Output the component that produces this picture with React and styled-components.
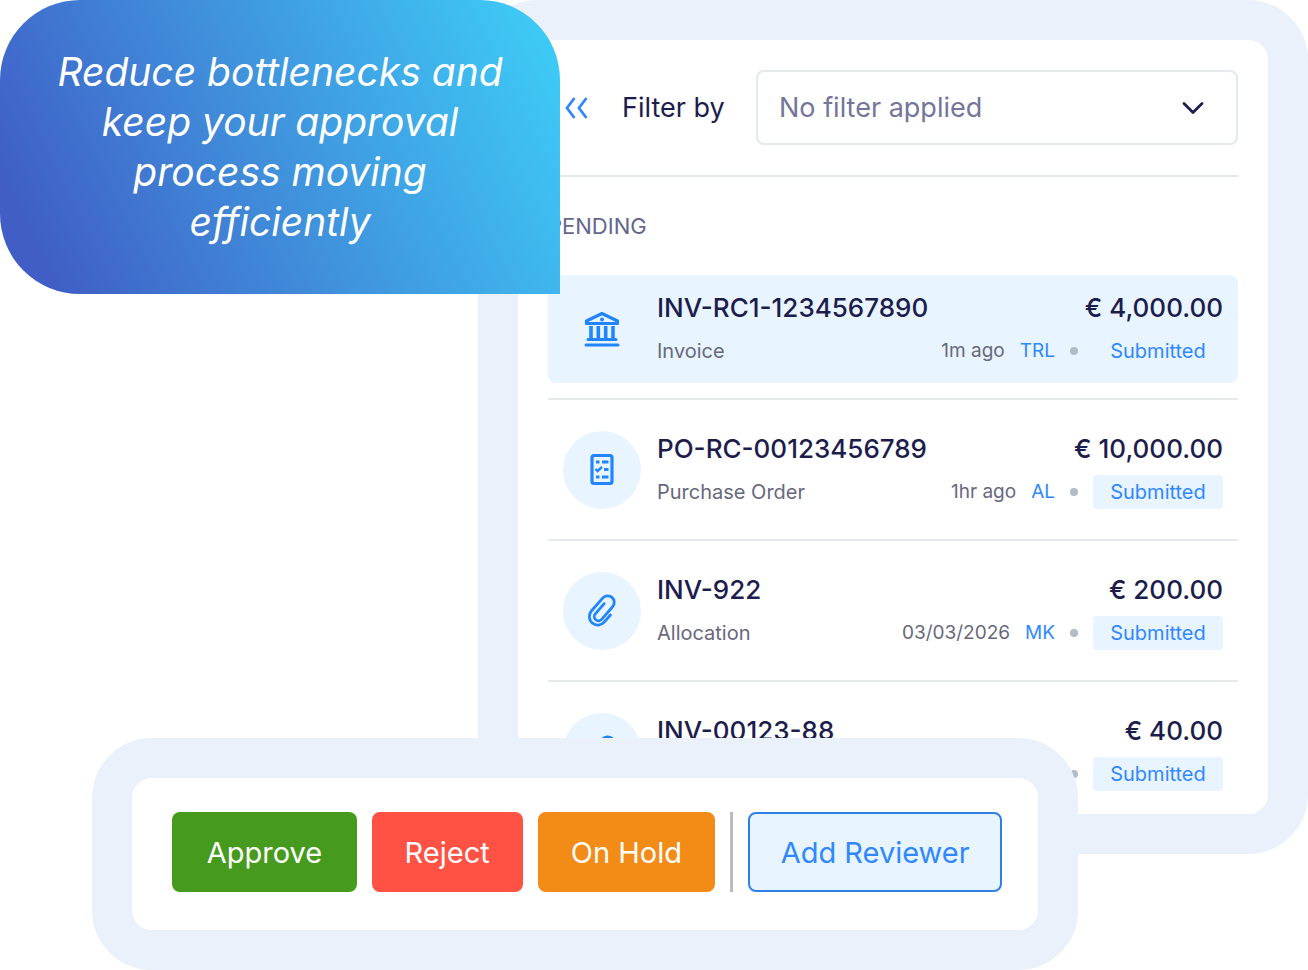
import React, { useState } from 'react';
import styled, { createGlobalStyle, css } from 'styled-components';

const documents = [
  { id: 'INV-RC1-1234567890', type: 'Invoice', icon: 'bank', amount: '€ 4,000.00', when: '1m ago', initials: 'TRL' },
  { id: 'PO-RC-00123456789', type: 'Purchase Order', icon: 'order', amount: '€ 10,000.00', when: '1hr ago', initials: 'AL' },
  { id: 'INV-922', type: 'Allocation', icon: 'clip', amount: '€ 200.00', when: '03/03/2026', initials: 'MK' },
  { id: 'INV-00123-88', type: 'Allocation', icon: 'clip', amount: '€ 40.00', when: '03/03/2026', initials: 'MK' },
];

function App() {
  const [filter, setFilter] = useState('');
  const [selected, setSelected] = useState('INV-RC1-1234567890');

  return (
    <>
      <GlobalStyle />
      <Stage>
        <Panel>
          <FilterBar>
            <CollapseButton type="button" aria-label="Collapse list">
              <DoubleChevron />
            </CollapseButton>
            <FilterLabel htmlFor="filter">Filter by</FilterLabel>
            <SelectBox>
              <Select id="filter" value={filter} onChange={(e) => setFilter(e.target.value)}>
                <option value="">No filter applied</option>
              </Select>
              <Chevron />
            </SelectBox>
          </FilterBar>
          <SectionTitle>PENDING</SectionTitle>
          <List>
            {documents.map((doc) => (
              <DocumentRow
                key={doc.id}
                doc={doc}
                active={doc.id === selected}
                onSelect={() => setSelected(doc.id)}
              />
            ))}
          </List>
        </Panel>
        <Callout>Reduce bottlenecks and keep your approval process moving efficiently</Callout>
        <ActionBar>
          <ActionButton type="button" $color="#469b1e" $grow={185}>Approve</ActionButton>
          <ActionButton type="button" $color="#ff5144" $grow={151}>Reject</ActionButton>
          <ActionButton type="button" $color="#f28c17" $grow={178}>On Hold</ActionButton>
          <Divider />
          <ActionButton type="button" $outline $grow={250}>Add Reviewer</ActionButton>
        </ActionBar>
      </Stage>
    </>
  );
}

export default App;

function DocumentRow({ doc, active, onSelect }) {
  const Icon = icons[doc.icon];

  return (
    <Row>
      <Card $active={active} onClick={onSelect}>
        <IconCircle>
          <Icon />
        </IconCircle>
        <Details>
          <Line>
            <Title>{doc.id}</Title>
            <Title>{doc.amount}</Title>
          </Line>
          <Line>
            <DocType>{doc.type}</DocType>
            <Meta>
              <span>{doc.when}</span>
              <Initials>{doc.initials}</Initials>
              <Dot />
              <Badge>Submitted</Badge>
            </Meta>
          </Line>
        </Details>
      </Card>
    </Row>
  );
}

const DoubleChevron = () => (
  <svg width="24" height="24" viewBox="0 0 24 24" fill="none" stroke="currentColor" strokeWidth="2.8">
    <path d="M10.5 2 3 12l7.5 10M22.5 2 15 12l7.5 10" />
  </svg>
);

const Chevron = () => (
  <ChevronSvg width="22" height="14" viewBox="0 0 22 14" fill="none" stroke="currentColor" strokeWidth="2.8" strokeLinecap="round" strokeLinejoin="round">
    <path d="M2 2.5 11 11.5 20 2.5" />
  </ChevronSvg>
);

const BankIcon = () => (
  <svg width="36" height="36" viewBox="0 0 36 36" fill="none" stroke="currentColor">
    <path d="M2.5 12.5V10L18 2.5 33.5 10v2.5z" strokeWidth="3.2" strokeLinejoin="round" />
    <circle cx="18" cy="8.5" r="2" fill="currentColor" stroke="none" />
    <path d="M7 15v13M14.3 15v13M21.7 15v13M29 15v13" strokeWidth="3.6" />
    <path d="M4 28.5h28M2 34h32" strokeWidth="3" strokeLinecap="round" />
  </svg>
);

const OrderIcon = () => (
  <svg width="36" height="36" viewBox="0 0 36 36" fill="none" stroke="currentColor">
    <rect x="8" y="3.5" width="20" height="28" rx="2" strokeWidth="3.2" />
    <path d="M12 10h3.5M18 10h6.5M20 17.5h4.5M12 25h3.5M18 25h6.5" strokeWidth="3" />
    <path d="m11.5 17 2 2 4.5-4" strokeWidth="2.4" />
  </svg>
);

const ClipIcon = () => (
  <svg width="36" height="36" viewBox="0 0 36 36" fill="none" stroke="currentColor" strokeWidth="2.8" strokeLinecap="round">
    <path
      transform="rotate(41 18 18)"
      d="M27 15.5V25a8.5 8.5 0 0 1-17 0V7.8a6.6 6.600 0 0 1 13.200 0V24.500a4.200 4.200 0 0 1-8.400 0V11"
    />
  </svg>
);

const icons = { bank: BankIcon, order: OrderIcon, clip: ClipIcon };

const GlobalStyle = createGlobalStyle`
  * {
    box-sizing: border-box;
  }

  body {
    margin: 0;
    background: #fff;
    color: #1d1d4d;
    font-family: Inter, 'Open Sans', sans-serif;
  }

  button,
  select {
    font-family: inherit;
  }
`;

const frame = css`
  background: #fff;
  border: 40px solid #eaf1fa;
  border-radius: 60px;
`;

const Stage = styled.main`
  display: grid;
  grid-template-columns: 92px 386px minmax(0, 1fr) 230px;
`;

const Panel = styled.section`
  ${frame}
  grid-column: 3 / 5;
  grid-row: 1;
  padding: 30px 30px 8px;
`;

const Callout = styled.p`
  grid-column: 1 / 4;
  grid-row: 1;
  align-self: start;
  width: 560px;
  margin: 0;
  padding: 47px 50px;
  border-radius: 80px 80px 0 80px;
  background: linear-gradient(64deg, #405ec6 8%, #4093dd 50%, #3ec8f5 94%);
  color: #fff;
  font-size: 39px;
  font-style: italic;
  font-weight: 400;
  line-height: 50px;
  text-align: center;
`;

const ActionBar = styled.div`
  ${frame}
  grid-column: 2 / 4;
  grid-row: 2;
  z-index: 1;
  display: flex;
  gap: 15px;
  margin-top: -116px;
  padding: 34px 36px 38px 40px;
`;

const ActionButton = styled.button`
  flex: ${(props) => props.$grow} 1 0;
  height: 80px;
  padding: 0;
  border: ${(props) => (props.$outline ? '2px solid #2f80e4' : 'none')};
  border-radius: 8px;
  background: ${(props) => (props.$outline ? '#e8f4ff' : props.$color)};
  color: ${(props) => (props.$outline ? '#2f88ff' : '#fff')};
  font-size: 29px;
  white-space: nowrap;
  cursor: pointer;
`;

const Divider = styled.span`
  width: 3px;
  background: #bbb;
`;

const FilterBar = styled.div`
  display: flex;
  align-items: center;
  padding: 0 0 30px 16px;
  border-bottom: 2px solid #e4e9eb;
`;

const CollapseButton = styled.button`
  display: flex;
  padding: 0;
  border: 0;
  background: none;
  color: #2f88ff;
  cursor: pointer;
`;

const FilterLabel = styled.label`
  width: 100px;
  margin: 0 34px;
  font-size: 27px;
  white-space: nowrap;
`;

const SelectBox = styled.div`
  display: grid;
  flex: 1;
  align-items: center;
  min-width: 0;
`;

const Select = styled.select`
  grid-area: 1 / 1;
  width: 100%;
  height: 75px;
  padding: 0 60px 0 21px;
  border: 2px solid #e4e9eb;
  border-radius: 8px;
  appearance: none;
  background: #fff;
  color: #74759a;
  font-size: 27px;
`;

const ChevronSvg = styled.svg`
  grid-area: 1 / 1;
  justify-self: end;
  margin-right: 34px;
  pointer-events: none;
`;

const SectionTitle = styled.h2`
  margin: 0;
  color: #65668c;
  font-size: 22px;
  font-weight: 400;
  line-height: 98px;
`;

const List = styled.ul`
  margin: 0;
  padding: 0;
  list-style: none;
`;

const Row = styled.li`
  & + & {
    margin-top: 15px;
    padding-top: 16px;
    border-top: 2px solid #e4e9eb;
  }
`;

const Card = styled.div`
  display: flex;
  align-items: center;
  gap: 16px;
  height: 108px;
  padding: 0 15px;
  border-radius: 8px;
  background: ${(props) => (props.$active ? '#e8f4ff' : 'transparent')};
  cursor: pointer;
`;

const IconCircle = styled.span`
  display: flex;
  flex: none;
  align-items: center;
  justify-content: center;
  width: 78px;
  height: 78px;
  border-radius: 50%;
  background: #e8f4ff;
  color: #2085ff;
`;

const Details = styled.div`
  display: grid;
  flex: 1;
  gap: 9px;
  min-width: 0;
`;

const Line = styled.div`
  display: flex;
  align-items: center;
  justify-content: space-between;
  line-height: 34px;
  white-space: nowrap;
`;

const Title = styled.span`
  font-size: 26px;
  font-weight: 500;
`;

const DocType = styled.span`
  color: #67687c;
  font-size: 20px;
`;

const Meta = styled.div`
  display: flex;
  align-items: center;
  gap: 15px;
  color: #67687c;
  font-size: 19px;
`;

const Initials = styled.span`
  color: #2f88ff;
`;

const Dot = styled.span`
  width: 8px;
  height: 8px;
  border-radius: 50%;
  background: #b0bcc6;
`;

const Badge = styled.span`
  width: 130px;
  border-radius: 4px;
  background: #e8f4ff;
  color: #2f88ff;
  font-size: 20px;
  text-align: center;
`;
